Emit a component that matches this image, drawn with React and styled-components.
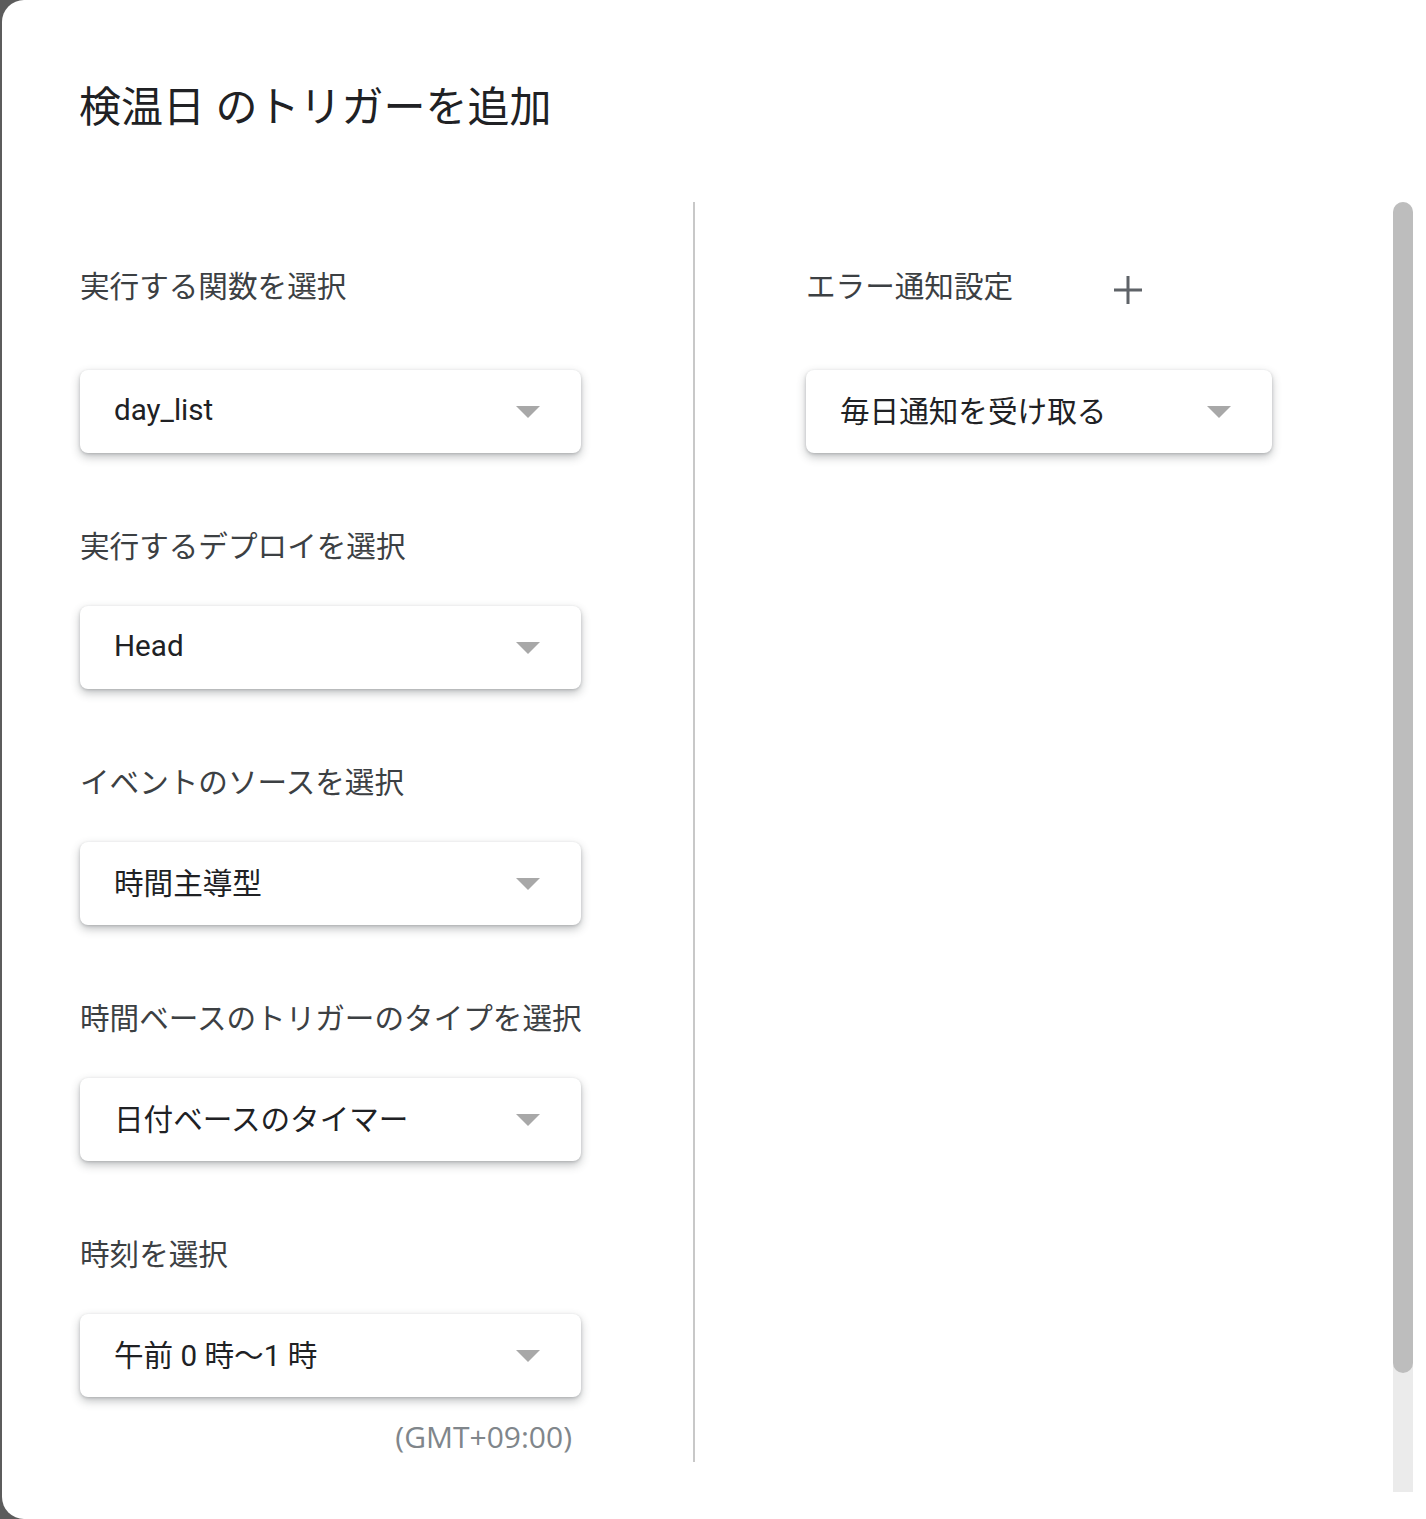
import React from "react";
import styled, { createGlobalStyle } from "styled-components";

const GlobalStyle = createGlobalStyle`
  html, body {
    margin: 0;
    padding: 0;
    overflow: hidden;
    background: #5c5c5c;
  }
  body {
    font-family: Roboto, "Noto Sans CJK JP", sans-serif;
  }
`;

const Dialog = styled.div`
  margin-left: 2px;
  height: 1519px;
  background: #fff;
  border-radius: 22px 0 0 22px;
  display: flex;
  flex-direction: column;
`;

const Title = styled.h1`
  margin: 0;
  padding: 86px 0 0 77px;
  height: 202px;
  box-sizing: border-box;
  font-size: 42px;
  line-height: 44px;
  font-weight: 400;
  color: #202124;
`;

const Body = styled.div`
  display: flex;
  height: 1290px;
  padding-right: 13px;
`;

const Columns = styled.div`
  flex: 1;
  display: flex;
`;

const LeftColumn = styled.div`
  width: 501px;
  padding: 65px 0 0 78px;
`;

const Divider = styled.div`
  width: 2px;
  height: 1260px;
  margin-left: 112px;
  background: #c8c8c8;
`;

const RightColumn = styled.div`
  width: 466px;
  padding: 65px 0 0 111px;
`;

const Field = styled.div`
  margin-bottom: 74px;
`;

const LabelRow = styled.div`
  display: flex;
  align-items: center;
  height: 40px;
  margin-bottom: ${({ $first }) => ($first ? "63px" : "39px")};
`;

const Label = styled.div`
  font-size: 29.6px;
  line-height: 40px;
  color: #3c4043;
  white-space: nowrap;
`;

const AddButton = styled.button`
  margin-left: 98px;
  margin-top: 6px;
  width: 34px;
  height: 34px;
  padding: 0;
  border: none;
  background: none;
  display: flex;
  align-items: center;
  justify-content: center;
`;

const Select = styled.div`
  height: 83px;
  box-sizing: border-box;
  border-radius: 8px;
  background: #fff;
  box-shadow: 0 4px 10px rgba(60, 64, 67, 0.32), 0 1px 3px rgba(60, 64, 67, 0.22);
  display: flex;
  align-items: center;
  justify-content: space-between;
  padding: 0 41px 4px 34px;
  font-size: 29.6px;
  color: #202124;
`;

const Arrow = styled.span`
  width: 0;
  height: 0;
  border-left: 12px solid transparent;
  border-right: 12px solid transparent;
  border-top: 12px solid #a8a8a8;
  margin-top: 4px;
`;

const Zone = styled.div`
  margin-top: 22px;
  text-align: right;
  padding-right: 9px;
  font-family: "Open Sans", Roboto, sans-serif;
  font-size: 30px;
  line-height: 36px;
  color: #80868b;
`;

const Track = styled.div`
  width: 20px;
  height: 1290px;
  display: flex;
  flex-direction: column;
  background: #ebebeb;
  border-radius: 10px 10px 0 0;
`;

const Thumb = styled.div`
  height: 1171px;
  border-radius: 10px;
  background: #bdbdbd;
`;

const PlusIcon = () => (
  <svg width="30" height="30" viewBox="0 0 30 30">
    <path d="M15 1v28M1 15h28" stroke="#5f6368" strokeWidth="3" />
  </svg>
);

const Dropdown = ({ value }) => (
  <Select>
    <span>{value}</span>
    <Arrow />
  </Select>
);

const fields = [
  { label: "実行する関数を選択", value: "day_list" },
  { label: "実行するデプロイを選択", value: "Head" },
  { label: "イベントのソースを選択", value: "時間主導型" },
  { label: "時間ベースのトリガーのタイプを選択", value: "日付ベースのタイマー" },
  { label: "時刻を選択", value: "午前 0 時〜1 時" },
];

export default function App() {
  return (
    <>
      <GlobalStyle />
      <Dialog>
        <Title>検温日 のトリガーを追加</Title>
        <Body>
          <Columns>
            <LeftColumn>
              {fields.map((f, i) => (
                <Field key={f.label}>
                  <LabelRow $first={i === 0}>
                    <Label>{f.label}</Label>
                  </LabelRow>
                  <Dropdown value={f.value} />
                  {i === fields.length - 1 && <Zone>(GMT+09:00)</Zone>}
                </Field>
              ))}
            </LeftColumn>
            <Divider />
            <RightColumn>
              <Field>
                <LabelRow $first>
                  <Label>エラー通知設定</Label>
                  <AddButton aria-label="追加">
                    <PlusIcon />
                  </AddButton>
                </LabelRow>
                <Dropdown value="毎日通知を受け取る" />
              </Field>
            </RightColumn>
          </Columns>
          <Track>
            <Thumb />
          </Track>
        </Body>
      </Dialog>
    </>
  );
}
